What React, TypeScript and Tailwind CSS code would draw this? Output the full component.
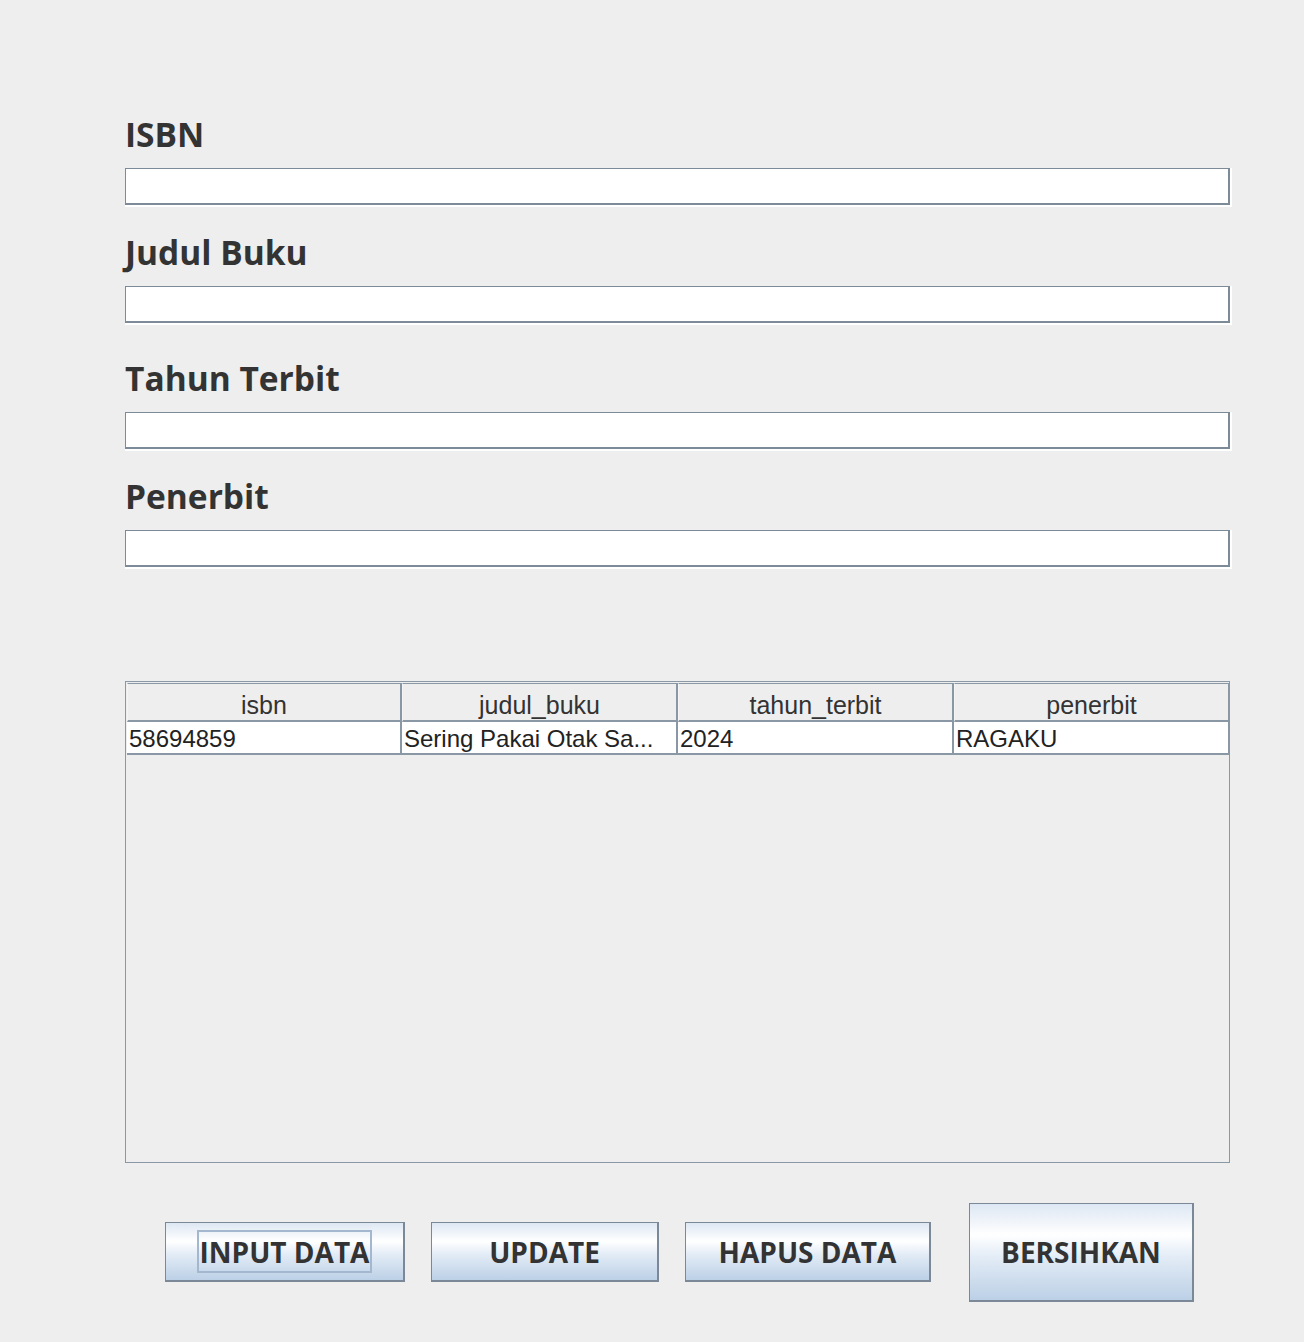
import React from 'react';

const fields = ['ISBN', 'Judul Buku', 'Tahun Terbit', 'Penerbit'];
const columns = ['isbn', 'judul_buku', 'tahun_terbit', 'penerbit'];
const rows = [['58694859', 'Sering Pakai Otak Sa...', '2024', 'RAGAKU']];

const labelFont = { fontFamily: '"Open Sans", "Noto Sans", sans-serif' };
const tableFont = { fontFamily: '"Liberation Sans", Arial, sans-serif' };

const Field = ({ label, top }: { label: string; top: string }) => (
    <div className={top}>
        <h2 className="text-[33.5px] font-bold leading-[40px] text-[#333333]" style={labelFont}>{label}</h2>
        {/* text box with the sunken swing border */}
        <div className="mt-[14px] w-[1107px] h-[39px] bg-white pr-[2px] pb-[2px]">
            <div className="w-full h-full border-t border-l border-r-2 border-b-2 border-[#7d8b99] bg-white"></div>
        </div>
    </div>
);

const Button = ({ label, className, focused }: { label: string; className: string; focused?: boolean }) => (
    <button
        className={`flex items-center justify-center border border-r-2 border-b-2 border-[#7a8897] bg-[linear-gradient(to_bottom,#dde7f3_0%,#ffffff_32%,#e3ecf6_55%,#bcd0e6_100%)] text-[28px] font-bold text-[#333333] ${className}`}
        style={labelFont}
    >
        {focused ? (
            <span className="border-2 border-[#a3b8cf] px-[1px] h-[43px] flex items-center">{label}</span>
        ) : (
            label
        )}
    </button>
);

const App = () => {
    return (
        <div className="w-[1304px] h-[1342px] bg-[#eeeeee] pl-[125px] pt-[114px]">
            <Field label={fields[0]} top="" />
            <Field label={fields[1]} top="mt-[25px]" />
            <Field label={fields[2]} top="mt-[33px]" />
            <Field label={fields[3]} top="mt-[25px]" />

            {/* table */}
            <div className="mt-[112px] w-[1105px] h-[482px] border border-[#8a97a4] bg-[#eeeeee] pl-[1px] pt-[1px]" style={tableFont}>
                <div className="grid grid-cols-[275px_276px_276px_276px] w-[1103px]">
                    {columns.map((c) => (
                        <div key={c} className="h-[39px] border-t border-l border-l-[#f4f4f4] border-t-[#8a97a4] border-r-2 border-b-2 border-r-[#8a97a4] border-b-[#8a97a4] flex items-center justify-center text-[25px] text-[#333333] pt-[7px]">
                            {c}
                        </div>
                    ))}
                    {rows.map((r) =>
                        r.map((v, i) => (
                            <div key={i} className="h-[33px] bg-white border-r-2 border-b-2 border-[#8a97a4] flex items-center pl-[2px] pt-[3px] text-[24px] text-[#222222]">
                                {v}
                            </div>
                        ))
                    )}
                </div>
            </div>

            {/* buttons */}
            <div className="flex items-center mt-[39px] ml-[40px] gap-[26px] h-[100px]">
                <Button label="INPUT DATA" className="w-[240px] h-[60px]" focused />
                <Button label="UPDATE" className="w-[228px] h-[60px]" />
                <Button label="HAPUS DATA" className="w-[246px] h-[60px]" />
                <Button label="BERSIHKAN" className="w-[225px] h-[99px] ml-[12px]" />
            </div>
        </div>
    );
};

export default App;
